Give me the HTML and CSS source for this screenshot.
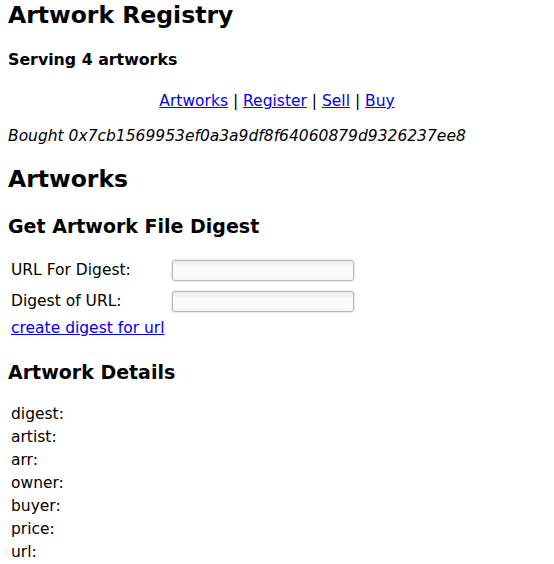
FILE: index.html
```html
<!DOCTYPE html>
<html>
<head>
<meta charset="utf-8">
<title>Artwork Registry</title>
<link rel="stylesheet" href="styles.css">
</head>
<body>
<h1 class="title">Artwork Registry</h1>
<h4 class="serving">Serving <span class="count">4</span> artworks</h4>
<nav class="nav"><a href="#">Artworks</a> | <a href="#">Register</a> | <a href="#">Sell</a> | <a href="#">Buy</a></nav>
<p class="bought">Bought 0x7cb1569953ef0a3a9df8f64060879d9326237ee8</p>
<h1 class="section">Artworks</h1>
<h3 class="sub sub-digest">Get Artwork File Digest</h3>
<div class="form">
  <label class="label">URL For Digest:</label>
  <input class="field" type="text">
  <label class="label">Digest of URL:</label>
  <input class="field" type="text">
</div>
<div class="action"><a href="#">create digest for url</a></div>
<h3 class="sub sub-details">Artwork Details</h3>
<div class="details">
  <div class="row">digest:</div>
  <div class="row">artist:</div>
  <div class="row">arr:</div>
  <div class="row">owner:</div>
  <div class="row">buyer:</div>
  <div class="row">price:</div>
  <div class="row">url:</div>
</div>
</body>
</html>
```
FILE: styles.css
```css
html, body {
  background: #ffffff;
}
body {
  margin: 0;
  padding: 1px 8px 0;
  font-family: "DejaVu Sans", sans-serif;
  font-size: 15.5px;
  line-height: 19px;
  color: #000000;
}
a {
  color: #0000ee;
  text-decoration: underline;
}
.title {
  margin: 0;
  font-size: 23.5px;
  line-height: 28px;
  font-weight: bold;
}
.serving {
  margin: 21px 0 0;
  font-size: 15.8px;
  line-height: 19px;
  font-weight: bold;
}
.count {
  font-weight: bold;
}
.nav {
  margin-top: 23px;
  text-align: center;
  line-height: 19px;
}
.bought {
  margin: 16px 0 0;
  font-style: italic;
  line-height: 19px;
}
.section {
  margin: 19px 0 0;
  font-size: 23.5px;
  line-height: 28px;
  font-weight: bold;
}
.sub {
  margin: 0;
  font-size: 19px;
  line-height: 22px;
  font-weight: bold;
}
.sub-digest {
  margin-top: 22px;
}
.form {
  margin-top: 18px;
  display: grid;
  grid-template-columns: 164px 182px;
  grid-auto-rows: 31px;
  align-items: center;
}
.label {
  padding-left: 3px;
  line-height: 19px;
}
.field {
  box-sizing: border-box;
  width: 182px;
  height: 21px;
  margin: 0;
  padding: 0 3px;
  border: 1px solid #b7b7b7;
  border-radius: 3px;
  box-shadow: 0 0 0 1px #ececec;
  background: linear-gradient(to bottom, #ececec 0%, #f9f9f9 35%, #fdfdfd 60%, #f5f5f5 100%);
  font-family: "DejaVu Sans", sans-serif;
  font-size: 13px;
}
.action {
  margin-top: 2px;
  padding-left: 3px;
  line-height: 19px;
}
.sub-details {
  margin-top: 23px;
}
.details {
  margin-top: 22px;
  display: flex;
  flex-direction: column;
  gap: 4px;
  padding-left: 3px;
}
.row {
  line-height: 19px;
}
```
